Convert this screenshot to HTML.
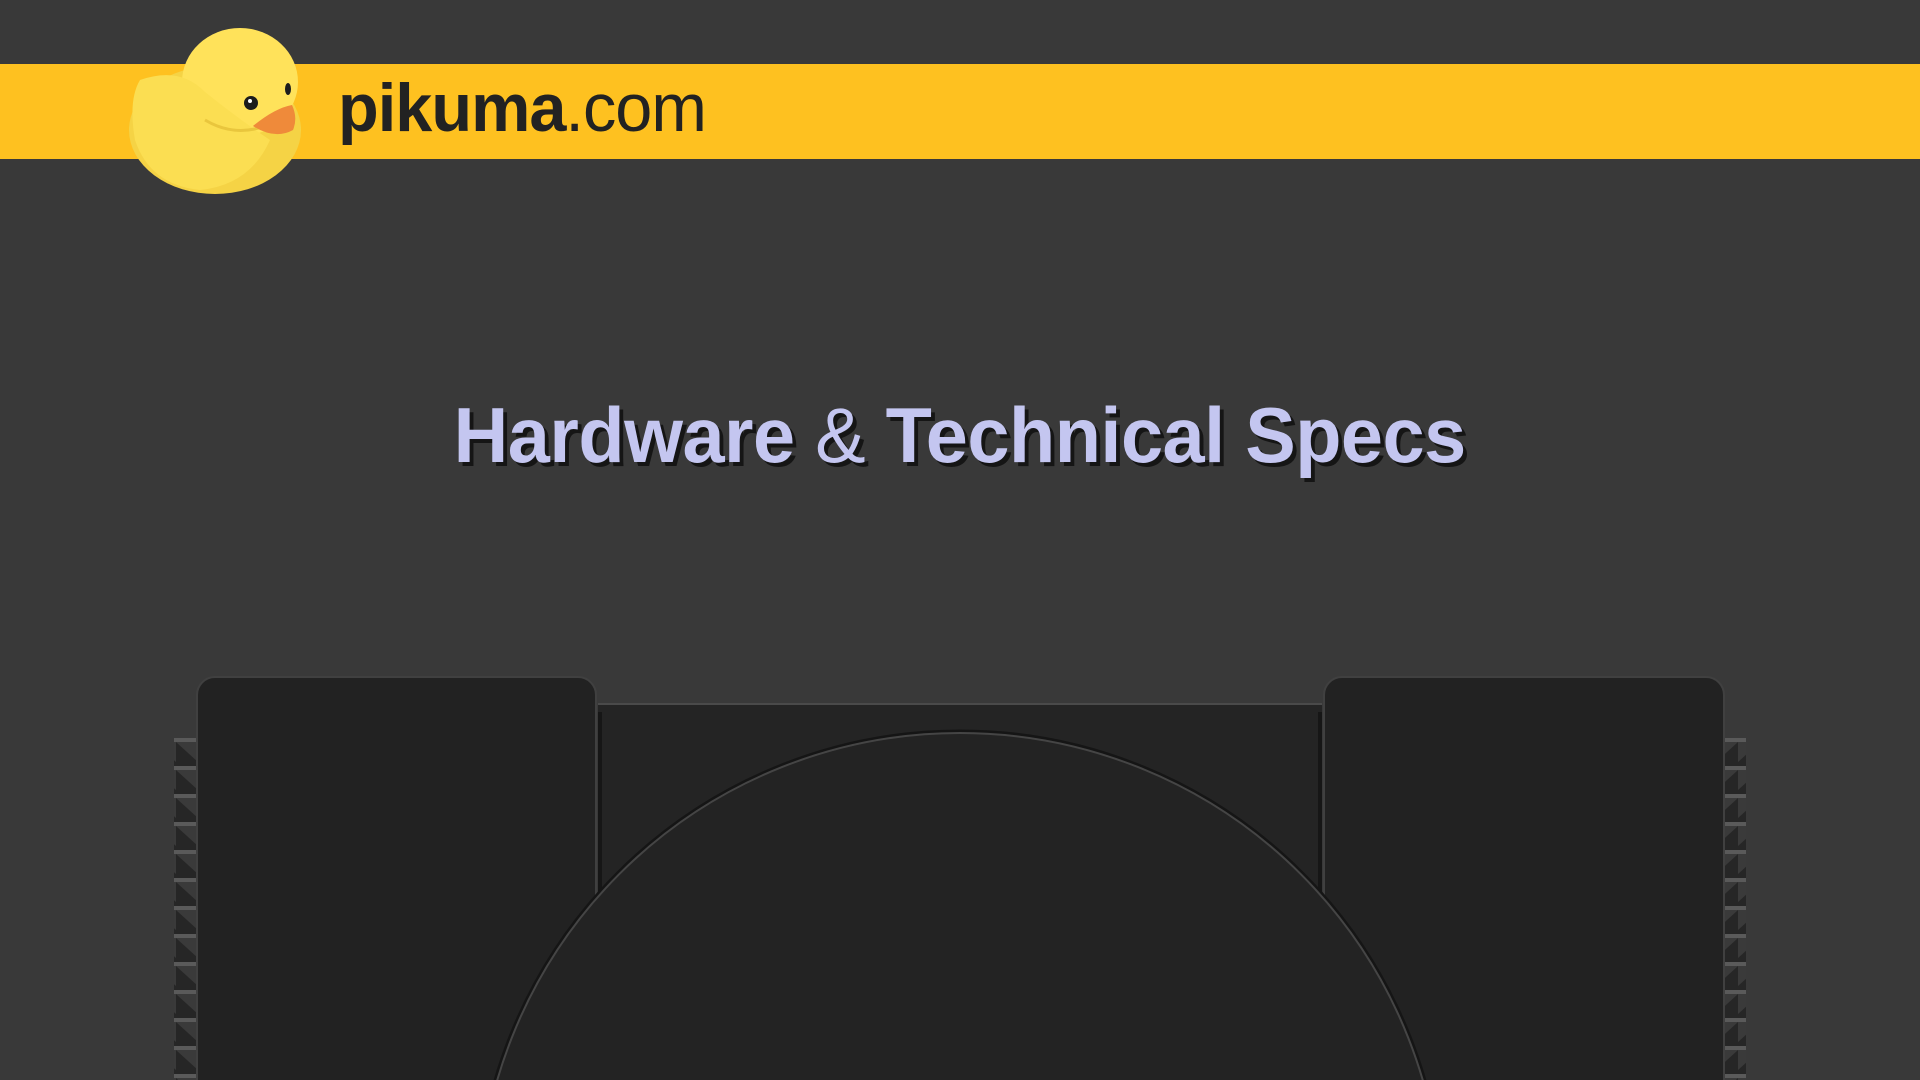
<!DOCTYPE html>
<html><head><meta charset="utf-8"><style>
html,body{margin:0;padding:0;width:1920px;height:1080px;overflow:hidden;background:#393939;font-family:"Liberation Sans",sans-serif}
.banner{position:absolute;left:0;top:64px;width:1920px;height:95px;background:#fec120}
.logo{position:absolute;left:338px;top:74px;font-size:68px;color:#222;letter-spacing:-1px;line-height:1;transform:scaleX(0.98);transform-origin:left}
.logo b{font-weight:bold}
.title{position:absolute;left:0;width:1920px;top:396px;text-align:center;line-height:1}
.title span{display:inline-block;font-size:78px;font-weight:bold;color:#c4c6f0;text-shadow:4px 4px 0 #151515;transform:scaleX(0.97);letter-spacing:-0.5px;white-space:nowrap}
.title i{font-style:normal;font-weight:normal}
svg{position:absolute;left:0;top:0}
</style></head><body>
<div class="banner"></div>
<svg width="1920" height="1080">
 <defs>
  <pattern id="rl" x="0" y="738" width="22" height="28" patternUnits="userSpaceOnUse">
   <rect width="22" height="28" fill="#262626"/>
   <polygon points="0,4 22,4 22,24" fill="#3a3a3a"/>
   <rect y="0" width="22" height="4" fill="#5a5a5a"/>
  </pattern>
  <pattern id="rr" x="0" y="738" width="22" height="28" patternUnits="userSpaceOnUse">
   <rect width="22" height="28" fill="#262626"/>
   <polygon points="22,4 0,4 0,24" fill="#3a3a3a"/>
   <rect y="0" width="22" height="4" fill="#5a5a5a"/>
  </pattern>
  <clipPath id="low"><rect x="0" y="705" width="1920" height="400"/></clipPath>
 </defs>
 <!-- duck -->
 <ellipse cx="215" cy="130" rx="86" ry="64" fill="#f5d345"/>
 <ellipse cx="240" cy="82" rx="58" ry="54" fill="#ffe25a"/>
 <path d="M140 80 Q180 66 205 92 Q240 120 270 140 Q250 185 200 190 Q150 185 135 140 Q128 100 140 80Z" fill="#fbde52"/>
 <path d="M205 120 Q235 138 268 125" stroke="#e9c63d" stroke-width="3" fill="none"/>
 <circle cx="251" cy="103" r="7" fill="#1c1c1c"/><circle cx="250" cy="101" r="2" fill="#fff"/>
 <ellipse cx="288" cy="89" rx="3" ry="6" fill="#1c1c1c"/>
 <path d="M253 126 Q275 108 292 105 Q298 118 293 130 Q275 140 253 126Z" fill="#ef8a3a"/>
 <!-- console -->
 <rect x="598" y="703" width="724" height="377" fill="#242424"/>
 <line x1="598" y1="704" x2="1322" y2="704" stroke="#4a4a4a" stroke-width="2"/>
 <rect x="174" y="738" width="22" height="342" fill="url(#rl)"/>
 <rect x="1724" y="738" width="22" height="342" fill="url(#rr)"/>
 <rect x="197" y="677" width="399" height="420" rx="18" fill="#222" stroke="#404040" stroke-width="2"/>
 <rect x="1324" y="677" width="400" height="420" rx="18" fill="#222" stroke="#404040" stroke-width="2"/>
 <line x1="600" y1="712" x2="600" y2="900" stroke="#161616" stroke-width="4"/>
 <line x1="1320" y1="712" x2="1320" y2="900" stroke="#161616" stroke-width="4"/>
 <g clip-path="url(#low)">
  <circle cx="960" cy="1215" r="484" fill="none" stroke="#151515" stroke-width="3"/>
  <circle cx="960" cy="1215" r="482" fill="#232323" stroke="#454545" stroke-width="2"/>
 </g>
</svg>
<div class="logo"><b>pikuma</b>.com</div>
<div class="title"><span>Hardware <i>&amp;</i> Technical Specs</span></div>
</body></html>
